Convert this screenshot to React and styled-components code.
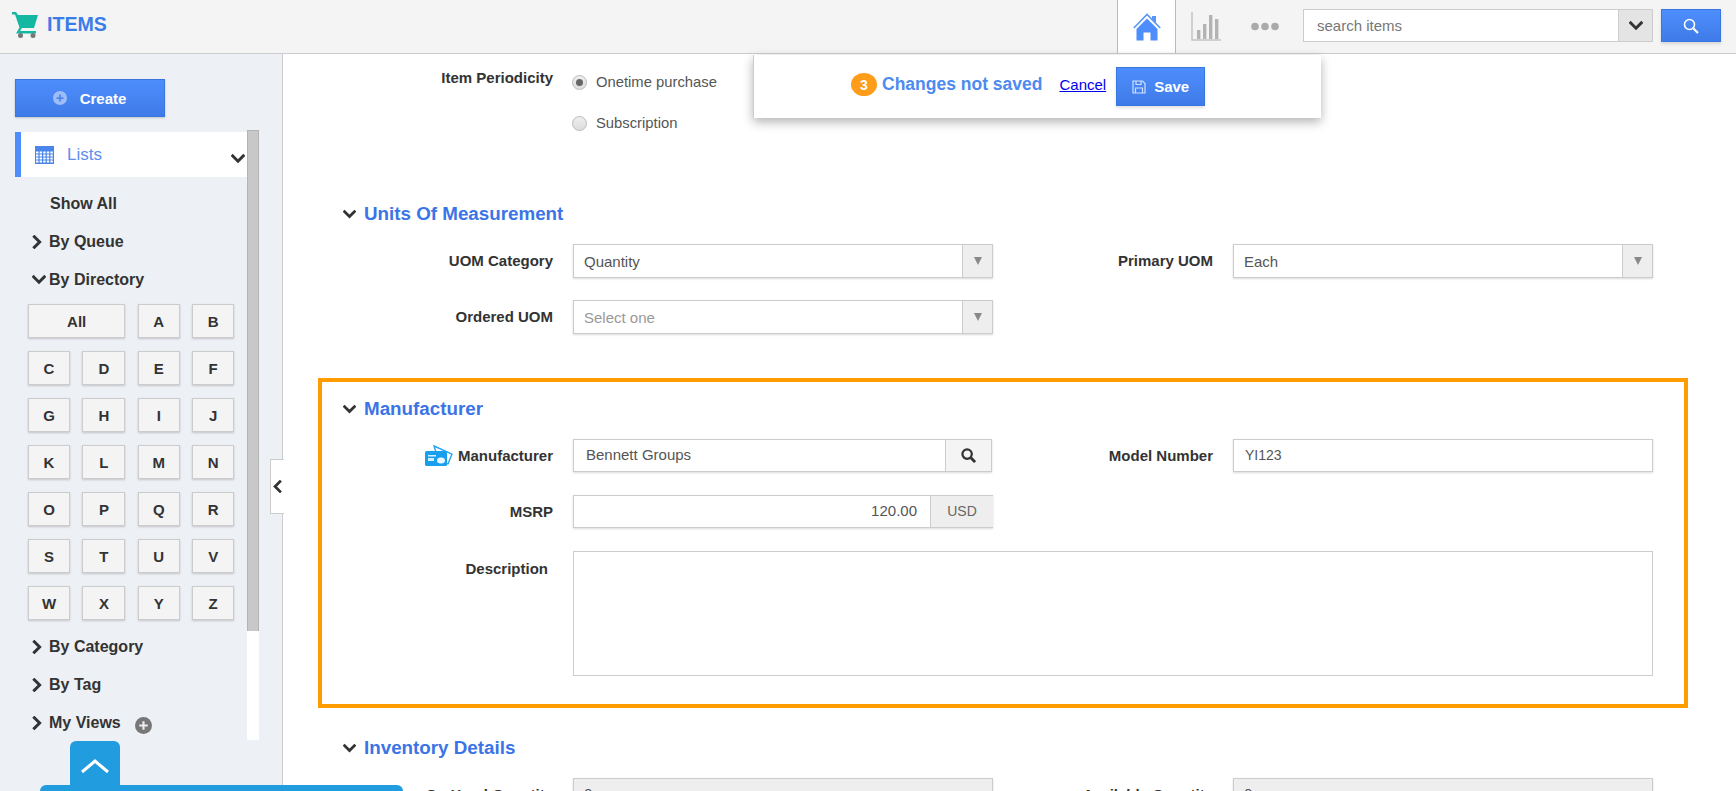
import React from "react";
import styled, { createGlobalStyle } from "styled-components";

const Global = createGlobalStyle`
  html, body { margin: 0; padding: 0; height: 100%; overflow: hidden; background: #fff; }
  body { font-family: "Liberation Sans", Arial, sans-serif; color: #333; }
  * { box-sizing: border-box; }
`;

const Page = styled.div`position: relative; height: 791px; width: 1736px; overflow: hidden; display: flex; flex-direction: column;`;
const Header = styled.header`height: 54px; flex: none; display: flex; align-items: flex-start; background: #f4f4f4; border-bottom: 1px solid #ccc;`;
const Logo = styled.div`display: flex; align-items: center; gap: 9px; margin: 11px 0 0 12px; font-size: 19.6px; font-weight: 700; color: #3b7de8; height: 26px;`;
const Spacer = styled.div`flex: 1;`;
const HomeTab = styled.div`width: 59px; height: 53px; display: flex; align-items: center; justify-content: center; background: #fff; border-left: 1px solid #bbb; border-right: 1px solid #bbb;`;
const ToolIcon = styled.div`height: 53px; display: flex; align-items: center; margin-left: ${p => p.$ml}px;`;
const SearchBox = styled.div`display: flex; width: 350px; height: 33px; margin: 9px 0 0 24px; background: #fff; border: 1px solid #ccc;`;
const SearchText = styled.div`flex: 1; font-size: 15px; line-height: 31px; padding-left: 13px; color: #777;`;
const SearchDrop = styled.div`width: 34px; background: #e4e4e4; border-left: 1px solid #ccc; display: flex; align-items: center; justify-content: center;`;
const SearchBtn = styled.div`width: 60px; height: 33px; margin: 9px 15px 0 8px; background: linear-gradient(#4d8efc, #3f7be8); border: 1px solid #3a76e0; box-shadow: 0 2px 3px rgba(0,0,0,.12); display: flex; align-items: center; justify-content: center;`;

const Body = styled.div`flex: 1; display: flex; min-height: 0;`;
const Sidebar = styled.aside`width: 283px; flex: none; background: #edf0f5; border-right: 1px solid #ccc; padding-top: 25px;`;
const CreateBtn = styled.div`margin-left: 15px; width: 150px; height: 38px; background: linear-gradient(#4d8efc, #3f7be8); border: 1px solid #3a76e0; box-shadow: 0 1px 2px rgba(0,0,0,.2); color: #fff; font-size: 15px; font-weight: 700; display: flex; align-items: center; justify-content: center; gap: 13px; padding-right: 1px;`;
const SideScroll = styled.div`display: flex; margin: 15px 0 0 15px; align-items: flex-start;`;
const SideCol = styled.div`width: 232px; flex: none;`;
const Track = styled.div`width: 12px; height: 610px; margin-top: -2px; background: #fff; flex: none;`;
const Thumb = styled.div`height: 501px; background: #c8c8c8; border: 1px solid #b4b4b4; border-bottom: none;`;
const ListsRow = styled.div`height: 45px; background: #fff; border-left: 6px solid #4d8efc; display: flex; align-items: center; padding-left: 14px; gap: 13px; color: #5b8ef0; font-size: 17px; margin-bottom: 8px;`;
const ListsChevron = styled.span`margin-left: auto; margin-right: 2px; margin-top: 9px; display: flex;`;
const ShowAll = styled.div`height: 38px; display: flex; align-items: center; padding-left: 35px; font-size: 16px; font-weight: 700;`;
const TreeRow = styled.div`height: 38px; display: flex; align-items: center; font-size: 16px; font-weight: 700; padding-left: ${p => p.$open ? 17 : 15}px; gap: ${p => p.$open ? 3 : 5}px; margin-top: ${p => p.$mt || 0}px;`;
const AddCircle = styled.span`display: flex; margin: 5px 0 0 9px;`;
const Letters = styled.div`display: grid; grid-template-columns: 42px 43px 42px 42px; column-gap: 12.4px; row-gap: 13px; margin: 5px 0 0 13px;`;
const Letter = styled.div`height: 34px; grid-column: ${p => p.$wide ? "span 2" : "auto"}; background: #f4f4f4; border: 1px solid #ccc; box-shadow: 0 1px 2px rgba(0,0,0,.18); font-size: 15px; font-weight: 700; display: flex; align-items: center; justify-content: center;`;

const Main = styled.main`flex: 1; min-width: 0; padding-top: 15px;`;
const Grid = styled.div`display: grid; grid-template-columns: ${p => p.$first}px 420px 202px 420px; column-gap: 19px; row-gap: ${p => p.$gap || 22}px; align-items: center;`;
const Label = styled.div`font-size: 15px; font-weight: 700; line-height: 18px; color: #333; display: flex; justify-content: flex-end; align-items: center; gap: 5px; white-space: nowrap; padding-right: 1px;`;
const TopLabel = styled(Label)`align-self: start; margin-top: 9px; padding-right: 6px;`;
const PeriodLabel = styled(Label)`align-self: start;`;
const RadioGroup = styled.div`display: flex; flex-direction: column; gap: 23px; margin: 4px 0 0 -1px; align-self: start;`;
const RadioRow = styled.div`display: flex; align-items: center; gap: 9px; font-size: 14.8px; line-height: 18px; color: #555;`;
const Radio = styled.span`width: 15px; height: 15px; border-radius: 50%; border: 1px solid #bbb; background: linear-gradient(#eee, #ddd); display: flex; align-items: center; justify-content: center; &::after { content: ""; display: ${p => p.$on ? "block" : "none"}; width: 7px; height: 7px; border-radius: 50%; background: #666; }`;
const Heading = styled.h2`margin: ${p => p.$mt}px 0 18px ${p => p.$ml}px; height: 24px; display: flex; align-items: center; gap: 8px; font-size: 18.8px; font-weight: 700; color: #3b74e6;`;
const Control = styled.div`height: ${p => p.$h || 34}px; width: ${p => p.$w || 420}px; display: flex; background: ${p => p.$off ? "#eee" : "#fff"}; border: 1px solid #ccc; box-shadow: 0 1px 2px rgba(0,0,0,.15); font-size: ${p => p.$fs || 15}px; color: #555; align-items: stretch;`;
const ControlText = styled.div`flex: 1; line-height: ${p => p.$lh || 33}px; padding: 0 ${p => p.$right ? 13 : 10}px 0 ${p => p.$pl || 10}px; text-align: ${p => p.$right ? "right" : "left"}; color: ${p => p.$muted ? "#999" : "#555"};`;
const SelectArrow = styled.div`width: 30px; background: #eee; border-left: 1px solid #ccc; display: flex; align-items: center; justify-content: center;`;
const Triangle = styled.span`width: 0; height: 0; border-left: 4.5px solid transparent; border-right: 4.5px solid transparent; border-top: 8px solid #888;`;
const LookupBtn = styled.div`width: 46px; background: #f4f4f4; border-left: 1px solid #ccc; display: flex; align-items: center; justify-content: center;`;
const Unit = styled.div`width: 63px; background: #eee; border-left: 1px solid #ccc; margin-right: -1px; color: #666; font-size: 14px; line-height: 30px; text-align: center;`;
const TextArea = styled.div`grid-column: 2 / -1; height: 125px; width: 1080px; border: 1px solid #ccc; background: #fff;`;
const Highlight = styled.section`margin: 44px 0 0 35px; width: 1370px; height: 330px; border: 4px solid #ff9c00; padding-top: 15px;`;
const Section = styled.section``;

const Popup = styled.div`position: absolute; left: 753px; top: 55px; width: 568px; height: 63px; background: #fff; border-left: 1px solid #ccc; box-shadow: 0 4px 10px rgba(0,0,0,.3); display: flex; align-items: flex-start; padding-left: 97px;`;
const Badge = styled.span`width: 26px; height: 23px; margin-top: 18px; border-radius: 50%; background: #ff9c1a; color: #fff; font-size: 14px; font-weight: 700; display: flex; align-items: center; justify-content: center;`;
const PopupMsg = styled.span`margin: 18px 0 0 5px; font-size: 17.5px; line-height: 23px; font-weight: 700; color: #4d8af0;`;
const CancelLink = styled.a`margin: 20px 0 0 17px; font-size: 15px; line-height: 19px; color: #00e; text-decoration: underline;`;
const SaveBtn = styled.div`margin: 12px 0 0 10px; width: 89px; height: 39px; background: linear-gradient(#4d8efc, #3f7be8); border: 1px solid #3a76e0; box-shadow: 0 2px 3px rgba(0,0,0,.12); color: #fff; font-size: 15px; font-weight: 700; display: flex; align-items: center; justify-content: center; gap: 8px;`;
const CollapseTab = styled.div`position: absolute; left: 270px; top: 459px; width: 14px; height: 55px; background: #fff; border: 1px solid #ccc; border-right: none; display: flex; align-items: center; justify-content: center;`;
const UpTab = styled.div`position: absolute; left: 70px; top: 741px; width: 50px; height: 50px; background: #209cdf; border-radius: 6px 6px 0 0; display: flex; justify-content: center; padding-top: 17px;`;
const BlueBar = styled.div`position: absolute; left: 40px; top: 785px; width: 363px; height: 6px; background: #209cdf; border-radius: 6px 6px 0 0;`;

const Chevron = ({ dir = "down", size = 14, width = 3.4, color = "#333" }) => {
  const d = { down: "M2 4.5 L8 10.5 L14 4.5", right: "M5 2 L11 8 L5 14", left: "M11 2 L5 8 L11 14" }[dir];
  return <svg width={size} height={size} viewBox="0 0 16 16" fill="none"><path d={d} stroke={color} strokeWidth={width} strokeLinecap="square" /></svg>;
};
const Cart = () => (
  <svg width="26" height="27" viewBox="0 0 26 27">
    <path d="M0 1h4l2 3h20l-4 13H10l-2 3h16v2.400H4l3.500-6L3 3.400H0z" fill="#14b8a0" />
    <circle cx="8.500" cy="24.500" r="2.500" fill="#777" />
    <circle cx="21" cy="24.500" r="2.500" fill="#777" />
  </svg>
);
const Home = () => (
  <svg width="28" height="28" viewBox="0 0 28 28">
    <path d="M0.800 15 14 1.500 27.200 15" fill="none" stroke="#5a96f5" strokeWidth="1.600" />
    <path d="M19 3h4v7l-4-4z" fill="#5a96f5" />
    <path d="M3.500 16 14 5.500 24.500 16V27.500h-7v-8h-7v8H3.500z" fill="#4d8efc" />
  </svg>
);
const Chart = () => (
  <svg width="30" height="29" viewBox="0 0 30 29">
    <path d="M1 0v28h29" fill="none" stroke="#c4c4c4" strokeWidth="1.500" />
    <g fill="#b3b3b3"><rect x="6" y="18" width="3.400" height="9" /><rect x="12" y="12" width="3.400" height="15" /><rect x="18" y="3" width="3.400" height="24" /><rect x="24" y="7" width="3.400" height="20" /></g>
  </svg>
);
const Dots = () => (
  <svg width="28" height="9" viewBox="0 0 28 9" fill="#aaa"><circle cx="4" cy="4.500" r="3.800" /><circle cx="14" cy="4.500" r="3.800" /><circle cx="24" cy="4.500" r="3.800" /></svg>
);
const Magnifier = ({ size = 16, color = "#fff", width = 1.600 }) => (
  <svg width={size} height={size} viewBox="0 0 16 16" fill="none" stroke={color} strokeWidth={width}><circle cx="6.500" cy="6.500" r="5" /><path d="M10.500 10.500 15 15" strokeWidth={width + .6} /></svg>
);
const PlusCircle = ({ size, bg, fg }) => (
  <svg width={size} height={size} viewBox="0 0 16 16"><circle cx="8" cy="8" r="8" fill={bg} /><path d="M8 4v8M4 8h8" stroke={fg} strokeWidth="2" /></svg>
);
const Calendar = () => (
  <svg width="19" height="18" viewBox="0 0 19 18">
    <rect width="19" height="18" fill="#4a85ea" />
    <g fill="#fff">{[0,1,2,3].map(r => [0,1,2,3,4].map(c => <rect key={`${r}${c}`} x={1 + c * 3.6} y={5.500 + r * 3} width="2.400" height="2" />))}</g>
  </svg>
);
const Floppy = () => (
  <svg width="14" height="14" viewBox="0 0 14 14" fill="none" stroke="#cfe0ff" strokeWidth="1.200"><path d="M1 1h9.500L13 3.500V13H1z" /><path d="M4 1v3.500h5V1M3.500 13V8h7v5" /></svg>
);
const Cards = () => (
  <svg width="28" height="22" viewBox="0 0 28 22">
    <path d="M9 1 27 9l-4 10-9-3z" fill="#fff" stroke="#24a6f2" strokeWidth="1.400" />
    <rect x="0" y="6" width="22" height="15" rx="1.500" fill="#18a0ee" />
    <rect x="3" y="10" width="8" height="1.500" fill="#d4efff" />
    <rect x="3" y="13" width="6" height="3" fill="#d4efff" />
    <ellipse cx="16" cy="15.500" rx="4" ry="3" fill="#eaf7ff" />
  </svg>
);

const rows = [["C","D","E","F"],["G","H","I","J"],["K","L","M","N"],["O","P","Q","R"],["S","T","U","V"],["W","X","Y","Z"]];

const Select = ({ children, muted }) => (
  <Control><ControlText $muted={muted}>{children}</ControlText><SelectArrow><Triangle /></SelectArrow></Control>
);

export default function App() {
  return (
    <Page>
      <Global />
      <Header>
        <Logo><Cart />ITEMS</Logo>
        <Spacer />
        <HomeTab><Home /></HomeTab>
        <ToolIcon $ml={15}><Chart /></ToolIcon>
        <ToolIcon $ml={30}><Dots /></ToolIcon>
        <SearchBox>
          <SearchText>search items</SearchText>
          <SearchDrop><Chevron size={14} /></SearchDrop>
        </SearchBox>
        <SearchBtn><Magnifier /></SearchBtn>
      </Header>
      <Body>
        <Sidebar>
          <CreateBtn><PlusCircle size={14} bg="#9dbdf8" fg="#4d85ee" />Create</CreateBtn>
          <SideScroll>
            <SideCol>
              <ListsRow><Calendar />Lists<ListsChevron><Chevron size={14} /></ListsChevron></ListsRow>
              <ShowAll>Show All</ShowAll>
              <TreeRow><Chevron dir="right" size={14} />By Queue</TreeRow>
              <TreeRow $open><Chevron size={14} />By Directory</TreeRow>
              <Letters>
                <Letter $wide>All</Letter><Letter>A</Letter><Letter>B</Letter>
                {rows.flat().map(l => <Letter key={l}>{l}</Letter>)}
              </Letters>
              <TreeRow $mt={8}><Chevron dir="right" size={14} />By Category</TreeRow>
              <TreeRow><Chevron dir="right" size={14} />By Tag</TreeRow>
              <TreeRow><Chevron dir="right" size={14} />My Views<AddCircle><PlusCircle size={17} bg="#777" fg="#eee" /></AddCircle></TreeRow>
            </SideCol>
            <Track><Thumb /></Track>
          </SideScroll>
        </Sidebar>
        <Main>
          <Grid $first={271}>
            <PeriodLabel>Item Periodicity</PeriodLabel>
            <RadioGroup>
              <RadioRow><Radio $on />Onetime purchase</RadioRow>
              <RadioRow><Radio />Subscription</RadioRow>
            </RadioGroup>
          </Grid>
          <Section>
            <Heading $mt={70} $ml={60}><Chevron size={13} />Units Of Measurement</Heading>
            <Grid $first={271}>
              <Label>UOM Category</Label><Select>Quantity</Select>
              <Label>Primary UOM</Label><Select>Each</Select>
              <Label>Ordered UOM</Label><Select muted>Select one</Select>
            </Grid>
          </Section>
          <Highlight>
            <Heading $mt={0} $ml={21}><Chevron size={13} />Manufacturer</Heading>
            <Grid $first={232} $gap={23}>
              <Label><Cards />Manufacturer</Label>
              <Control $h={33} $w={419}><ControlText $lh={30} $pl={12}>Bennett Groups</ControlText><LookupBtn><Magnifier size={15} color="#333" width={2.4} /></LookupBtn></Control>
              <Label>Model Number</Label>
              <Control $h={33} $fs={14}><ControlText $lh={30} $pl={11}>YI123</ControlText></Control>
              <Label>MSRP</Label>
              <Control $h={33}><ControlText $lh={30} $right>120.00</ControlText><Unit>USD</Unit></Control>
              <div /><div />
              <TopLabel>Description</TopLabel>
              <TextArea />
            </Grid>
          </Highlight>
          <Section>
            <Heading $mt={28} $ml={60}><Chevron size={13} />Inventory Details</Heading>
            <Grid $first={271}>
              <Label>On Hand Quantity</Label>
              <Control $off><ControlText $lh={29}>0</ControlText></Control>
              <Label>Available Quantity</Label>
              <Control $off><ControlText $lh={29}>0</ControlText></Control>
            </Grid>
          </Section>
        </Main>
      </Body>
      <Popup>
        <Badge>3</Badge>
        <PopupMsg>Changes not saved</PopupMsg>
        <CancelLink href="#">Cancel</CancelLink>
        <SaveBtn><Floppy />Save</SaveBtn>
      </Popup>
      <CollapseTab><Chevron dir="left" size={13} /></CollapseTab>
      <UpTab><svg width="30" height="16" viewBox="0 0 30 16" fill="none"><path d="M2 14 15 3l13 11" stroke="#fff" strokeWidth="3" /></svg></UpTab>
      <BlueBar />
    </Page>
  );
}
